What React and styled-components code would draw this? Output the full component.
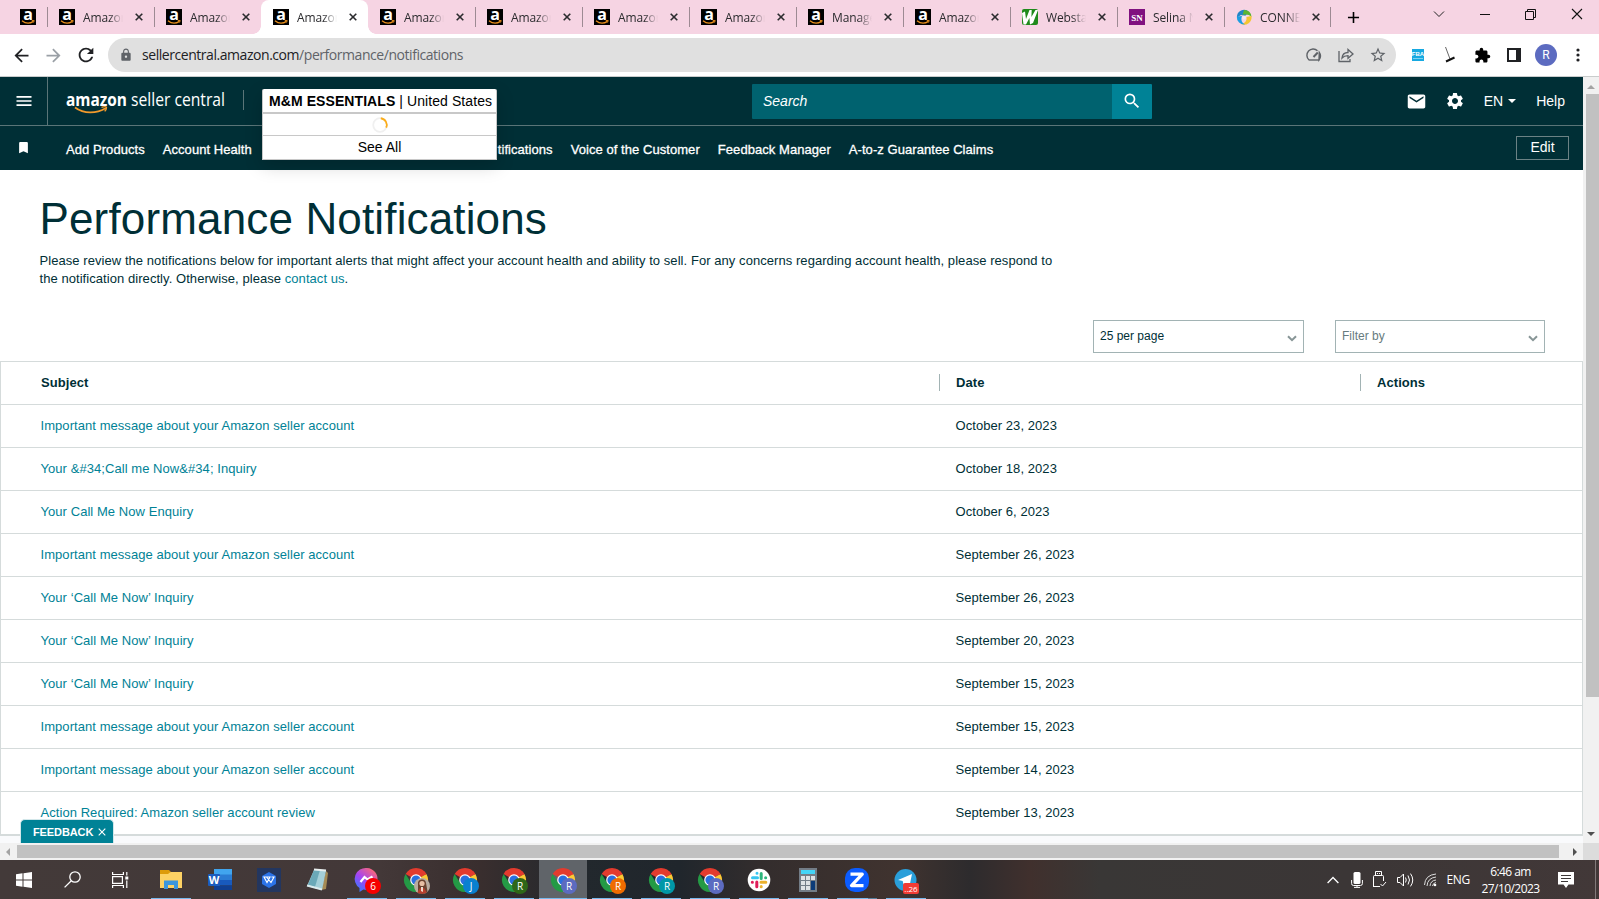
import React from "react"
import styled, { createGlobalStyle, css } from "styled-components"
import {
  MdArrowBack,
  MdArrowForward,
  MdRefresh,
  MdLock,
  MdStarBorder,
  MdExtension,
  MdMenu,
  MdBookmark,
  MdSearch,
  MdMail,
  MdSettings,
  MdAdd,
} from "react-icons/md"

const tabs = [
  { icon: "amazon", title: "Amazon" },
  { icon: "amazon", title: "Amazon" },
  { icon: "amazon", title: "Amazon", active: true },
  { icon: "amazon", title: "Amazon" },
  { icon: "amazon", title: "Amazon" },
  { icon: "amazon", title: "Amazon" },
  { icon: "amazon", title: "Amazon" },
  { icon: "amazon", title: "Manage" },
  { icon: "amazon", title: "Amazon" },
  { icon: "webstaurant", title: "Websta" },
  { icon: "selina", title: "Selina N" },
  { icon: "connect", title: "CONNE" },
]

const notifications = [
  ["Important message about your Amazon seller account", "October 23, 2023"],
  ["Your &#34;Call me Now&#34; Inquiry", "October 18, 2023"],
  ["Your Call Me Now Enquiry", "October 6, 2023"],
  ["Important message about your Amazon seller account", "September 26, 2023"],
  ["Your ‘Call Me Now’ Inquiry", "September 26, 2023"],
  ["Your ‘Call Me Now’ Inquiry", "September 20, 2023"],
  ["Your ‘Call Me Now’ Inquiry", "September 15, 2023"],
  ["Important message about your Amazon seller account", "September 15, 2023"],
  ["Important message about your Amazon seller account", "September 14, 2023"],
  ["Action Required: Amazon seller account review", "September 13, 2023"],
]

const Favicon = ({ type }) => {
  if (type === "webstaurant") {
    return (
      <svg width="16" height="16" viewBox="0 0 16 16">
        <rect width="16" height="16" rx="2" fill="#1f8a1b" />
        <path d="M0 4l3-1.500 1 7.500L7.500 1h2.200l-.3 7L13.500 1H16l-5 13-3 1.500-.6-6.500L4 15.500H1.500z" fill="#fff" />
      </svg>
    )
  }
  if (type === "selina") {
    return (
      <svg width="16" height="16" viewBox="0 0 16 16">
        <rect width="16" height="16" fill="#80107f" />
        <text x="8" y="11.5" fontSize="9" fontWeight="bold" textAnchor="middle" fill="#fff" fontFamily="Liberation Serif, serif">SN</text>
      </svg>
    )
  }
  if (type === "connect") {
    return (
      <svg width="16" height="16" viewBox="0 0 16 16">
        <path d="M1 8.500A7 7 0 0 1 13 3L9 7l-4-1z" fill="#2384c6" />
        <path d="M8 1a7 7 0 0 1 7.500 7C13 5.500 10 5 6.500 6z" fill="#5cb531" />
        <path d="M15.500 7A7.500 7.500 0 0 1 5 15c4-.5 6-3 5.500-7z" fill="#f4c531" />
        <path d="M.8 7.500A7.500 7.500 0 0 0 9 15.500C6 14 4.500 11 6 7z" fill="#1b9de2" />
        <circle cx="8" cy="8.500" r="2" fill="#f5e9ee" />
      </svg>
    )
  }
  return (
    <svg width="16" height="16" viewBox="0 0 16 16">
      <rect width="16" height="16" fill="#000" />
      <text x="8" y="11.2" fontSize="16" fontWeight="bold" textAnchor="middle" fill="#fff" fontFamily="Open Sans, sans-serif">a</text>
      <path d="M2 11.8c3.5 2.8 8 2.8 11.5.6" fill="none" stroke="#e88f1c" strokeWidth="1.3" />
      <path d="M11.8 11.5h2.4l-.6 2" fill="none" stroke="#e88f1c" strokeWidth=".9" />
    </svg>
  )
}

const Cross = ({ size = 8, width = 1.6 }) => (
  <svg width={size} height={size} viewBox="0 0 8 8">
    <path d="M.7.7l6.6 6.6M7.3.7L.7 7.3" stroke="currentColor" strokeWidth={width} />
  </svg>
)

const Logo = () => (
  <svg width="162" height="28" viewBox="0 0 162 28" fill="#fff" fontFamily="Open Sans, sans-serif">
    <text x="0" y="15.5" fontSize="18" fontWeight="bold" textLength="61" lengthAdjust="spacingAndGlyphs">amazon</text>
    <text x="65" y="15.5" fontSize="18.5" textLength="94" lengthAdjust="spacingAndGlyphs">seller central</text>
    <path d="M9 17.500c9 6.500 21 6.500 31 .5" fill="none" stroke="#f19a2c" strokeWidth="1.8" />
    <path d="M35.500 17.300c3-1 5-.7 5 .1s-.6 2.600-1.800 4" fill="none" stroke="#f19a2c" strokeWidth="1.4" />
  </svg>
)

const Chevron = () => (
  <svg width="10" height="7" viewBox="0 0 10 7">
    <path d="M1 1.2l4 4 4-4" fill="none" stroke="#879596" strokeWidth="2" />
  </svg>
)

const ChromeIcon = () => (
  <>
    <path d="M12 12L1.6 6A12 12 0 0 1 22.4 6z" fill="#e33b2e" />
    <path d="M12 12L22.4 6A12 12 0 0 1 12 24l-1-6z" fill="#fcc934" />
    <path d="M12 12l4 5-4 7A12 12 0 0 1 1.6 6l5 8z" fill="#249a45" />
    <path d="M12 6.5h10.6A12 12 0 0 0 20 3z" fill="#e33b2e" />
    <circle cx="12" cy="12" r="5.8" fill="#fff" />
    <circle cx="12" cy="12" r="4.6" fill="#2a6fe0" />
  </>
)

const appIcons = {
  explorer: (
    <>
      <path d="M1 2h9l2 2h-1v5H1z" fill="#dd9b0a" />
      <path d="M1 6h8l2.500-2H23v16H1z" fill="#fdd264" />
      <path d="M5 12.5h14V21h-4v-4H9v4H5z" fill="#3b96dc" />
    </>
  ),
  word: (
    <>
      <path d="M6 1h18v6H6z" fill="#41a5ee" />
      <path d="M6 6.5h18V12H6z" fill="#2b7cd3" />
      <path d="M6 12h18v5.5H6z" fill="#185abd" />
      <path d="M6 17.5h18V22H6z" fill="#103f91" />
      <rect y="6" width="12" height="12" rx="1" fill="#1b5cbe" />
      <text x="6" y="16" fontSize="11" fontWeight="bold" textAnchor="middle" fill="#fff" fontFamily="Open Sans, sans-serif">W</text>
    </>
  ),
  wps: (
    <>
      <rect width="24" height="24" fill="#23365f" />
      <path d="M12 4l7 4v8l-7 4-7-4V8z" fill="#2b73e8" />
      <path d="M7 9h6l-3 5.500zM9.500 9l4.500 5.500L17 9h-2.500" fill="none" stroke="#fff" strokeWidth="1.1" />
    </>
  ),
  notepad: (
    <>
      <path d="M20 3l2 2-2 16-5 1z" fill="#a58b55" />
      <path d="M8 2l12 1-4 19L1 18z" fill="#a4cfd8" />
      <path d="M8 2h6l-5 17-7-2z" fill="#6ba9b8" />
      <path d="M8 1.500l12 1" stroke="#e8eeee" strokeWidth="2" />
      <path d="M1 17.500l15 4" stroke="#dcebed" strokeWidth="2" />
    </>
  ),
  messenger: (
    <>
      <defs>
        <linearGradient id="messenger" x1="0" y1="1" x2=".8" y2="0">
          <stop offset="0" stopColor="#168bff" />
          <stop offset=".5" stopColor="#a343f5" />
          <stop offset="1" stopColor="#ff6a70" />
        </linearGradient>
      </defs>
      <path d="M12 0a11.2 11 0 1 1-3.6 21.6L4.5 24v-4A11 11 0 0 1 12 0z" fill="url(#messenger)" />
      <path d="M5.5 14l4-5 3 2.5 5-3" fill="none" stroke="#fff" strokeWidth="2.2" />
    </>
  ),
  chrome: <ChromeIcon />,
  slack: (
    <>
      <circle cx="12" cy="12" r="11.3" fill="#fff" />
      <g strokeWidth="3" strokeLinecap="round">
        <path d="M5.5 9.8h5M10 5.2v.1" stroke="#36c5f0" />
        <path d="M14.2 5.5v5M18.6 9.8h.1" stroke="#2eb67d" />
        <path d="M14 14.2h4.8M14.2 18.6v.1" stroke="#ecb22e" />
        <path d="M9.8 14v4.8M5.3 14.2h.1" stroke="#e01e5a" />
      </g>
    </>
  ),
  calculator: (
    <>
      <rect x="3" width="18" height="24" fill="#737d87" />
      <rect x="5" y="2" width="14" height="4" fill="#43d4f7" />
      <path d="M5 8h4v4H5zM10 8h4v4h-4zM15 8h4v4h-4zM5 13h4v4H5zM10 13h4v4h-4zM5 18h4v4H5zM10 18h4v4h-4z" fill="#dfe2e5" />
      <rect x="15" y="13" width="4" height="9" fill="#0b3b78" />
    </>
  ),
  zoom: (
    <>
      <rect width="24" height="24" rx="10" fill="#0b5cff" />
      <path d="M5.5 6.2h11.800L6.500 17.600h12" fill="none" stroke="#fff" strokeWidth="3.2" strokeLinejoin="round" />
    </>
  ),
  telegram: (
    <>
      <circle cx="11.5" cy="12" r="11" fill="#2a9fda" />
      <path d="M4 12L18 6l-2.5 12-4-3-2 2-.8-4z" fill="#fff" />
    </>
  ),
}

const apps = [
  { name: "explorer", open: true },
  { name: "word" },
  { name: "wps" },
  { name: "notepad" },
  { name: "messenger", open: true, badge: "6", color: "#f60000" },
  { name: "chrome", open: true, photo: true },
  { name: "chrome", open: true, badge: "J", color: "#0a80d0" },
  { name: "chrome", open: true, badge: "R", color: "#2f6718" },
  { name: "chrome", open: true, badge: "R", color: "#5c6bc0", active: true },
  { name: "chrome", open: true, badge: "R", color: "#ef6c00" },
  { name: "chrome", open: true, badge: "R", color: "#0097a7" },
  { name: "chrome", open: true, badge: "R", color: "#5c6bc0" },
  { name: "slack", open: true },
  { name: "calculator", open: true },
  { name: "zoom", open: true, stacked: true },
  { name: "telegram", open: true, badge: "..26", color: "#f23c34", wide: true },
]

const App = () => (
  <Screen>
    <GlobalStyle />
    <TabStrip>
      <PinnedTab><Favicon type="amazon" /></PinnedTab>
      {tabs.map((tab, i) => (
        <Tab key={i} $active={tab.active} $line={!tab.active && i !== 3}>
          <Favicon type={tab.icon} />
          <TabTitle>{tab.title}</TabTitle>
          <Cross />
        </Tab>
      ))}
      <NewTab><MdAdd size={19} /></NewTab>
      <WindowButtons>
        <svg width="12" height="8" viewBox="0 0 12 8"><path d="M1 1.5l5 5 5-5" fill="none" stroke="#222" /></svg>
        <svg width="10" height="10" viewBox="0 0 10 10"><path d="M0 5.5h10" stroke="#111" /></svg>
        <svg width="11" height="11" viewBox="0 0 11 11"><path d="M.5 2.5h8v8h-8zM2.5 2.5v-2h8v8h-2" fill="none" stroke="#111" /></svg>
        <svg width="12" height="12" viewBox="0 0 12 12"><path d="M1 1l10 10M11 1L1 11" stroke="#111" strokeWidth="1.1" /></svg>
      </WindowButtons>
    </TabStrip>

    <Toolbar>
      <NavButton><MdArrowBack size={21} /></NavButton>
      <NavButton $muted><MdArrowForward size={21} /></NavButton>
      <NavButton><MdRefresh size={22} /></NavButton>
      <AddressBar>
        <MdLock size={14} color="#5f6368" />
        <Url>sellercentral.amazon.com<span>/performance/notifications</span></Url>
        <IconRow $count={3} $end>
          <svg width="16" height="16" viewBox="0 0 16 16" fill="none" stroke="#5f6368" strokeWidth="1.4">
            <path d="M3 13a6.300 6.300 0 1 1 8.500-9.300M13.300 5.500A6.300 6.300 0 0 1 13 13z" />
            <path d="M2.800 13h10.400" />
            <path d="M7.500 10l4.300-4.500" strokeWidth="2" />
          </svg>
          <svg width="16" height="16" viewBox="0 0 16 16" fill="none" stroke="#5f6368" strokeWidth="1.3">
            <path d="M1 4v10.500h11V12" />
            <path d="M4 11c.4-3.7 2.5-5.5 6-5.500V2.500L15 7l-5 4.300V8.600C7.500 8.600 5.500 9.300 4 11z" />
          </svg>
          <MdStarBorder size={18} color="#5f6368" />
        </IconRow>
      </AddressBar>
      <IconRow $count={6}>
        <svg width="12" height="12" viewBox="0 0 12 12">
          <rect width="12" height="12" fill="#16a9e1" />
          <text x="6" y="7" fontSize="6" fontWeight="bold" textAnchor="middle" fill="#fff" fontFamily="Liberation Sans, sans-serif">FBA</text>
          <path d="M1 9.5h10" stroke="#7fd0ee" />
        </svg>
        <svg width="12" height="16" viewBox="0 0 12 16">
          <path d="M1.500 0l4.500 12" stroke="#666" />
          <path d="M2 14.500l8.500-4" stroke="#111" strokeWidth="2" />
        </svg>
        <MdExtension size={17} />
        <svg width="14" height="14" viewBox="0 0 14 14"><path d="M1 1h12v12H1z" fill="#fff" stroke="#202124" strokeWidth="2" /><path d="M9 1h4v12H9z" fill="#202124" /></svg>
        <Avatar>R</Avatar>
        <svg width="4" height="14" viewBox="0 0 4 14" fill="#202124"><circle cx="2" cy="2" r="1.600" /><circle cx="2" cy="7" r="1.600" /><circle cx="2" cy="12" r="1.600" /></svg>
      </IconRow>
    </Toolbar>

    <Viewport>
      <Page>
        <Header>
          <MenuButton><MdMenu size={20} /></MenuButton>
          <LogoWrap><Logo /></LogoWrap>
          <SearchBox>
            <SearchInput>Search</SearchInput>
            <SearchButton><MdSearch size={20} /></SearchButton>
          </SearchBox>
          <HeaderActions>
            <MdMail size={21} />
            <MdSettings size={20} />
            <Language>EN<Caret /></Language>
            <span>Help</span>
          </HeaderActions>
        </Header>
        <NavBar>
          <BookmarkWrap><MdBookmark size={15} /></BookmarkWrap>
          <NavLinks>
            <NavLink>Add Products</NavLink>
            <NavLink>Account Health</NavLink>
            <NavLink $pushed>tifications</NavLink>
            <NavLink>Voice of the Customer</NavLink>
            <NavLink>Feedback Manager</NavLink>
            <NavLink>A-to-z Guarantee Claims</NavLink>
          </NavLinks>
          <EditButton>Edit</EditButton>
        </NavBar>
        <AccountMenu>
          <AccountName><b>M&amp;M ESSENTIALS</b> | United States</AccountName>
          <Loading>
            <svg width="16" height="16" viewBox="0 0 16 16" fill="none" strokeWidth="1.800">
              <circle cx="8" cy="8" r="6.800" stroke="#f0f0f0" />
              <path d="M8.800 1.250A6.800 6.800 0 0 1 14.200 10.700" stroke="#fbad1b" />
            </svg>
          </Loading>
          <SeeAll>See All</SeeAll>
        </AccountMenu>

        <Intro>
          <Title>Performance Notifications</Title>
          <Description>
            Please review the notifications below for important alerts that might affect your account health and ability to sell. For any concerns regarding account health, please respond to<br />
            the notification directly. Otherwise, please <a>contact us</a>.
          </Description>
        </Intro>
        <Filters>
          <Select $width={211}>25 per page<Chevron /></Select>
          <Select $width={210} $placeholder>Filter by<Chevron /></Select>
        </Filters>
        <Table>
          <HeadRow>
            <HeadCell>Subject</HeadCell>
            <HeadCell $divided>Date</HeadCell>
            <HeadCell $divided>Actions</HeadCell>
          </HeadRow>
          {notifications.map(([subject, date], i) => (
            <Row key={i}>
              <Subject>{subject}</Subject>
              <span>{date}</span>
            </Row>
          ))}
        </Table>
        <Feedback>FEEDBACK<Cross size={8} width={1.1} /></Feedback>
      </Page>
      <VScroll>
        <Arrow $dir="top" $muted />
        <VThumb />
        <Arrow $dir="bottom" />
      </VScroll>
    </Viewport>
    <HScroll>
      <Arrow $dir="left" $muted />
      <HThumb />
      <Arrow $dir="right" />
      <Corner />
    </HScroll>

    <Taskbar>
      <SystemButton>
        <svg width="16" height="16" viewBox="0 0 16 16" fill="#fff"><path d="M0 2.200L6.500 1.300v6.200H0zM7.500 1.200L16 0v7.500H7.500zM0 8.500h6.500v6.200L0 13.800zM7.500 8.500H16V16l-8.500-1.200z" /></svg>
      </SystemButton>
      <SystemButton>
        <svg width="17" height="17" viewBox="0 0 17 17" fill="none" stroke="#fff" strokeWidth="1.300"><circle cx="11" cy="6" r="5.200" /><path d="M7.300 9.700L.6 16.400" /></svg>
      </SystemButton>
      <SystemButton>
        <svg width="17" height="16" viewBox="0 0 17 16" fill="none" stroke="#fff" strokeWidth="1.200"><path d="M.6 0v2.500h10.800V0M.6 16v-2.500h10.800V16M.6 4.600h9.800v6.800H.6zM14.800 0v3.500M14.800 8.500V16" /><path d="M13.300 4.500h3v3h-3z" fill="#fff" stroke="none" /></svg>
      </SystemButton>
      <Apps>
        {apps.map((app, i) => (
          <TaskButton key={i} $active={app.active}>
            <svg width="24" height="24" viewBox="0 0 24 24">{appIcons[app.name]}</svg>
            {app.badge && <Badge $color={app.color} $wide={app.wide}>{app.badge}</Badge>}
            {app.photo && (
              <Badge $color="#b9aca0">
                <svg width="16" height="16" viewBox="0 0 16 16"><path d="M4 16V6a4 4 0 0 1 8-1l2 11z" fill="#6b4330" /><circle cx="8" cy="5.500" r="2.600" fill="#e8bfa4" /><path d="M3 15l3-5h4l3 5-5 1z" fill="#b8402f" /><path d="M7 9h2v5l-2-1z" fill="#f0d8c8" /></svg>
              </Badge>
            )}
            {app.open && <Underline $active={app.active} $stacked={app.stacked} />}
          </TaskButton>
        ))}
      </Apps>
      <Tray>
        <svg width="12" height="8" viewBox="0 0 12 8" fill="none" stroke="#fff" strokeWidth="1.300"><path d="M.6 7L6 1.500 11.400 7" /></svg>
        <svg width="12" height="16" viewBox="0 0 12 16"><rect x="2.500" width="7" height="12" rx="1.500" fill="#fff" /><path d="M.6 8v3.500q0 2 2 2h6.800q2 0 2-2V8M6 13.500V15M3 15.400h6" fill="none" stroke="#fff" /></svg>
        <svg width="13" height="17" viewBox="0 0 13 17" fill="none" stroke="#fff"><path d="M2.500 4.500v-4h6v4M.5 16V5.500q0-1 1-1h8q1 0 1 1V10M.5 15.500H7" /><path d="M4 2.500h1M6 2.500h1M7.500 13l2 2 3.500-4" /></svg>
        <svg width="17" height="14" viewBox="0 0 17 14" fill="none" stroke="#fff"><path d="M.5 4.500H3L6.500 1v12L3 9.500H.5z" /><path d="M8.500 4.500q1.500 2.500 0 5M11 2.500q3 4.500 0 9M13.500.6q4.500 6.400 0 12.800" /></svg>
        <svg width="13" height="13" viewBox="0 0 13 13" fill="none" stroke="#ddd"><path d="M.5 12Q1 2 12 1M3 13Q3.500 5 12 4M6 13Q6.500 7.500 12 7M8.500 13Q9 10 12 9.500" /><circle cx="11" cy="12" r="1.300" fill="#fff" stroke="none" /></svg>
        <Lang>ENG</Lang>
        <Clock><span>6:46 am</span><span>27/10/2023</span></Clock>
        <svg width="16" height="16" viewBox="0 0 16 16"><path d="M0 0h16v12.500h-5.500L8 16l-2.500-3.500H0z" fill="#fff" /><path d="M3 3.500h10M3 6.500h10M3 9.500h7" stroke="#3d3838" /></svg>
      </Tray>
      <ShowDesktop />
    </Taskbar>
  </Screen>
)

export default App

const GlobalStyle = createGlobalStyle`
  * {
    box-sizing: border-box;
  }
  body {
    margin: 0;
    font-family: "Liberation Sans", Arial, sans-serif;
  }
  svg {
    display: block;
    flex: none;
    overflow: visible;
  }
`

const Screen = styled.div`
  width: 1599px;
  height: 899px;
  display: flex;
  flex-direction: column;
  overflow: hidden;
  background: #fff;
`

const TabStrip = styled.div`
  height: 34px;
  flex: none;
  display: flex;
  background: #f6d4e3;
`

const PinnedTab = styled.div`
  width: 47px;
  padding: 9px 0 0 20px;
`

const Tab = styled.div`
  position: relative;
  width: 107px;
  display: flex;
  align-items: center;
  padding: 0 11px 0 12px;
  color: #2b2b2e;
  ${props => props.$line && css`
    &::before {
      content: "";
      position: absolute;
      left: 0;
      top: 7px;
      width: 1px;
      height: 20px;
      background: #9d8a93;
    }
  `}
  ${props => props.$active && css`
    background: #fff;
    border-radius: 8px 8px 0 0;
    &::before, &::after {
      content: "";
      position: absolute;
      bottom: 0;
      left: -8px;
      width: 8px;
      height: 8px;
      background: radial-gradient(circle at 0 0, transparent 7.5px, #fff 8px);
    }
    &::after {
      left: 100%;
      background: radial-gradient(circle at 100% 0, transparent 7.5px, #fff 8px);
    }
  `}
`

const TabTitle = styled.span`
  width: 40px;
  margin: 0 12px 0 8px;
  overflow: hidden;
  white-space: nowrap;
  font: 12px "Open Sans", sans-serif;
  letter-spacing: -0.1px;
  mask-image: linear-gradient(90deg, #000 65%, transparent 100%);
`

const NewTab = styled.div`
  display: flex;
  align-items: center;
  width: 47px;
  padding-left: 13px;
  border-left: 1px solid #9d8a93;
  height: 20px;
  margin: 7px 1px 0 -1px;
`

const WindowButtons = styled.div`
  flex: 1;
  display: flex;
  align-items: center;
  justify-content: space-between;
  height: 28px;
  padding: 0 16px 0 55px;
`

const Toolbar = styled.div`
  height: 43px;
  flex: none;
  display: flex;
  align-items: center;
  border-bottom: 1px solid #c9cccc;
  padding: 0 5px 0 11px;
`

const NavButton = styled.div`
  width: 32px;
  display: flex;
  color: ${props => (props.$muted ? "#9aa0a6" : "#202124")};
`

const AddressBar = styled.div`
  width: 1288px;
  height: 34px;
  margin: 0 6px 1px 1px;
  display: flex;
  align-items: center;
  padding: 0 2px 0 11px;
  border-radius: 17px;
  background: #e0e0e0;
`

const Url = styled.div`
  margin-left: 9px;
  font: 14px "Open Sans", sans-serif;
  letter-spacing: -0.45px;
  color: #202124;
  span {
    color: #5f6368;
  }
`

const IconRow = styled.div`
  display: grid;
  grid-template-columns: repeat(${props => props.$count}, 32px);
  align-items: center;
  justify-items: center;
  margin-left: ${props => (props.$end ? "auto" : "0")};
`

const Avatar = styled.div`
  width: 22px;
  height: 22px;
  border-radius: 50%;
  background: #5c6bc0;
  color: #fff;
  font: 12px/22px Roboto, sans-serif;
  text-align: center;
`

const Viewport = styled.div`
  height: 766px;
  flex: none;
  display: flex;
`

const Page = styled.div`
  position: relative;
  width: 1583px;
  height: 766px;
  background: #f9fafc;
  color: #002f36;
  overflow: hidden;
`

const Header = styled.div`
  height: 49px;
  display: flex;
  align-items: center;
  background: #002f36;
  border-bottom: 1px solid #5a7578;
  color: #fff;
  font-size: 14px;
`

const MenuButton = styled.div`
  width: 48px;
  align-self: stretch;
  display: flex;
  align-items: center;
  padding: 0 0 1px 14px;
  border-right: 1px solid #5a7578;
`

const LogoWrap = styled.div`
  width: 178px;
  height: 20px;
  margin: -2px 0 0 18px;
  border-right: 1px solid #5a7578;
`

const SearchBox = styled.div`
  display: flex;
  width: 400px;
  height: 35px;
  margin-left: 508px;
  border-radius: 1px;
  overflow: hidden;
`

const SearchInput = styled.div`
  flex: 1;
  padding-left: 11px;
  background: #00626f;
  font-style: italic;
  line-height: 34px;
`

const SearchButton = styled.div`
  width: 40px;
  display: flex;
  align-items: center;
  justify-content: center;
  background: #008296;
`

const HeaderActions = styled.div`
  margin-left: auto;
  padding-right: 18px;
  display: flex;
  align-items: center;
  gap: 19px;
  svg:first-child {
    margin-right: -1.5px;
  }
`

const Language = styled.div`
  display: flex;
  align-items: center;
  margin-right: 1px;
`

const Caret = styled.i`
  margin-left: 5px;
  border: 4px solid transparent;
  border-top-color: #fff;
  border-bottom-width: 0;
`

const NavBar = styled.div`
  height: 44px;
  display: flex;
  align-items: center;
  padding-right: 14px;
  background: #002f36;
  color: #fff;
`

const BookmarkWrap = styled.div`
  width: 66px;
  padding: 0 0 1px 16px;
`

const NavLinks = styled.div`
  display: flex;
  gap: 18px;
  padding-top: 2px;
`

const NavLink = styled.span`
  font-size: 13px;
  letter-spacing: 0.06px;
  -webkit-text-stroke: 0.3px #fff;
  white-space: nowrap;
  margin-left: ${props => (props.$pushed ? "228px" : "0")};
`

const EditButton = styled.div`
  width: 53px;
  height: 24px;
  margin-left: auto;
  margin-bottom: 1px;
  border: 1px solid #6b8285;
  font-size: 14px;
  line-height: 21px;
  text-align: center;
`

const AccountMenu = styled.div`
  position: absolute;
  left: 262px;
  top: 12px;
  width: 235px;
  height: 71px;
  background: #fff;
  border: 1px solid #c8c8c8;
  border-top: 0;
  border-radius: 2px 2px 0 0;
  color: #000;
  font-size: 14px;
  box-shadow: 0 6px 18px rgba(0, 0, 0, 0.18);
`

const AccountName = styled.div`
  height: 25px;
  padding-left: 6px;
  border-bottom: 2px solid #c8c8c8;
  line-height: 25px;
  letter-spacing: 0.08px;
  white-space: nowrap;
`

const Loading = styled.div`
  height: 22px;
  display: flex;
  align-items: center;
  justify-content: center;
  border-bottom: 1px solid #c8c8c8;
`

const SeeAll = styled.div`
  line-height: 23px;
  text-align: center;
`

const Intro = styled.div`
  height: 150px;
  padding: 22px 39.500px 0;
  background: #fff;
`

const Title = styled.h1`
  margin: 0;
  font-size: 44px;
  font-weight: normal;
  line-height: 54px;
  letter-spacing: 0.15px;
`

const Description = styled.p`
  margin: 6px 0 0;
  font-size: 13px;
  line-height: 18px;
  letter-spacing: 0.06px;
  white-space: nowrap;
  a {
    color: #008296;
  }
`

const Filters = styled.div`
  height: 41px;
  display: flex;
  justify-content: flex-end;
  gap: 31px;
  padding-right: 38px;
  background: #fff;
`

const Select = styled.div`
  width: ${props => props.$width}px;
  height: 33px;
  display: flex;
  justify-content: space-between;
  padding: 8px 6px 0;
  border: 1px solid #a2b3b4;
  color: ${props => (props.$placeholder ? "#667b7e" : "#002f36")};
  font-size: 12px;
  svg {
    margin-top: 6px;
  }
`

const Table = styled.div`
  border: 1px solid #d5dbdb;
  border-bottom-width: 2px;
  background: #fff;
  font-size: 13px;
  letter-spacing: 0.06px;
`

const HeadRow = styled.div`
  height: 42px;
  padding-bottom: 2px;
  display: grid;
  grid-template-columns: 938px 421px 1fr;
  align-items: center;
`

const HeadCell = styled.div`
  height: 17px;
  padding-left: ${props => (props.$divided ? "16px" : "40px")};
  border-left: ${props => (props.$divided ? "1px solid #a2b3b4" : "0")};
  font-weight: bold;
  line-height: 17px;
`

const Row = styled.div`
  height: 43px;
  display: grid;
  grid-template-columns: 954.5px 1fr;
  border-top: 1px solid #d5dbdb;
  line-height: 41px;
`

const Subject = styled.a`
  padding-left: 39.5px;
  color: #008296;
`

const Feedback = styled.div`
  position: absolute;
  left: 20px;
  bottom: 0;
  width: 94px;
  height: 24px;
  display: flex;
  align-items: center;
  gap: 5px;
  padding-left: 12px;
  border: 1px solid #d3e7ea;
  border-bottom: 0;
  border-radius: 5px 5px 0 0;
  background: #008296;
  color: #fff;
  font-size: 11px;
  font-weight: bold;
  letter-spacing: -0.1px;
`

const VScroll = styled.div`
  width: 16px;
  display: flex;
  flex-direction: column;
  align-items: center;
  padding: 8px 0 7px;
  background: #f1f1f1;
`

const VThumb = styled.div`
  width: 13px;
  height: 603px;
  margin: 5px 0 auto 2px;
  background: #c1c1c1;
`

const opposite = { top: "bottom", bottom: "top", left: "right", right: "left" }

// $dir is the side the arrow points to
const Arrow = styled.i`
  border: 4px solid transparent;
  border-${props => props.$dir}-width: 0;
  border-${props => opposite[props.$dir]}-color: ${props => (props.$muted ? "#a3a3a3" : "#505050")};
`

const HScroll = styled.div`
  height: 17px;
  flex: none;
  display: flex;
  align-items: center;
  padding-left: 6px;
  background: #f1f1f1;
`

const HThumb = styled.div`
  width: 1542px;
  height: 13px;
  margin: 0 14px 0 7px;
  background: #c1c1c1;
`

const Corner = styled.div`
  width: 16px;
  height: 17px;
  margin-left: auto;
  background: #dcdcdc;
`

const Taskbar = styled.div`
  height: 39px;
  flex: none;
  display: flex;
  background: linear-gradient(90deg, #433a39 0, #433838 380px, #392e2e 480px, #22282d 580px, #20262c 680px, #332d2d 760px, #40332f 900px, #2d2b2d 970px, #40302d 1030px, #393736 1100px, #3b3636 1350px, #423838 1599px);
  color: #fff;
`

const SystemButton = styled.div`
  width: 48px;
  display: flex;
  align-items: center;
  justify-content: center;
`

const Apps = styled.div`
  display: flex;
  gap: 1px;
  margin-left: 3px;
`

const TaskButton = styled.div`
  position: relative;
  width: 48px;
  display: flex;
  align-items: center;
  justify-content: center;
  background: ${props => (props.$active ? "#606469" : "transparent")};
`

const Badge = styled.span`
  position: absolute;
  left: ${props => (props.$wide ? "21px" : "22px")};
  top: ${props => (props.$wide ? "23px" : "18px")};
  width: 16px;
  height: ${props => (props.$wide ? "11px" : "16px")};
  overflow: hidden;
  border-radius: ${props => (props.$wide ? "2px" : "50%")};
  background: ${props => props.$color};
  font: ${props => (props.$wide ? "8px/11px" : "10px/16px")} "Open Sans", sans-serif;
  text-align: center;
`

const Underline = styled.i`
  position: absolute;
  bottom: 0;
  left: ${props => (props.$active ? "0" : "4px")};
  right: ${props => (props.$active ? "0" : "4px")};
  height: 1px;
  background: ${props => (props.$stacked ? "linear-gradient(90deg, #76b9ed 31px, #56809f 31px)" : "#76b9ed")};
`

const Tray = styled.div`
  margin-left: auto;
  width: 251px;
  display: flex;
  align-items: center;
  gap: 10.5px;
  svg:nth-child(2) {
    margin-left: 1px;
  }
`

const Lang = styled.span`
  margin-left: -1px;
  font: 12px "Open Sans", sans-serif;
  letter-spacing: -0.3px;
`

const Clock = styled.div`
  width: 60px;
  margin: 0 7px 0 0;
  display: flex;
  flex-direction: column;
  align-items: center;
  font: 12px/17px "Open Sans", sans-serif;
  letter-spacing: -0.55px;
`

const ShowDesktop = styled.div`
  width: 4px;
  margin-left: 17px;
  border-left: 1px solid #827a7a;
`
